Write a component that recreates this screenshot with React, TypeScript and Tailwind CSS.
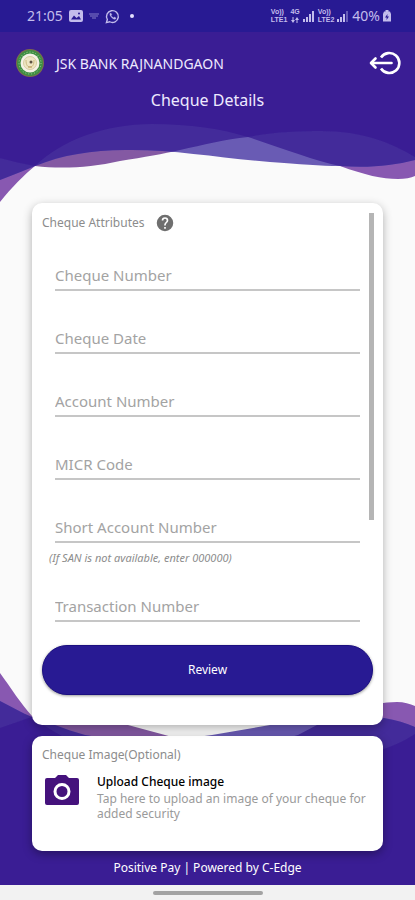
import { useState } from 'react';

interface Field {
  id: string;
  label: string;
  hint?: string;
}

interface WaveProps {
  id: string;
  className: string;
  viewBox: string;
  paths: [string, string, string];
}

const FIELDS: Field[] = [
  { id: 'cheque-number', label: 'Cheque Number' },
  { id: 'cheque-date', label: 'Cheque Date' },
  { id: 'account-number', label: 'Account Number' },
  { id: 'micr-code', label: 'MICR Code' },
  { id: 'short-account-number', label: 'Short Account Number', hint: '(If SAN is not available, enter 000000)' },
  { id: 'transaction-number', label: 'Transaction Number' },
];

const TOP_WAVES: [string, string, string] = [
  'M0 0V202C12 187 24 175 35 166C62 140 105 124 152 124C190 124 222 129 248 137C285 149 312 160 340 166C365 175 382 179 398 179C405 179 411 178 415 176V0Z',
  'M0 0V180C12 175 24 171 35 166C62 155 92 150 125 150C172 149 220 158 270 162C300 164 320 166 340 166C368 168 392 166 415 160V0Z',
  'M0 0V158C12 161 24 164 35 166C60 169 90 168 120 161C145 157 163 154 180 150C203 145 225 139 248 137C272 132 296 131 322 131C362 131 392 143 415 157V0Z',
];

const BOTTOM_WAVES: [string, string, string] = [
  'M0 212V0C11 15 21 31 32 43C70 76 130 90 190 86C240 82 275 68 298 62L317 52C345 38 370 29 397 29C404 29 410 31 415 33V212Z',
  'M0 212V28C12 34 22 40 32 44L55 52C65 56 75 59 85 62C130 70 170 68 212 62L270 52C310 43 350 40 384 45C396 47 406 50 415 54V212Z',
  'M0 212V55C12 51 22 47 32 44C65 37 100 42 128 52L165 62C210 76 265 86 320 86C360 86 392 76 415 61V212Z',
];

// Three overlapping waves: one tint each, darker where two meet, solid where all three do.
function Waves({ id, className, viewBox, paths }: WaveProps) {
  const [a, b, c] = paths;
  return (
    <svg className={className} viewBox={viewBox} preserveAspectRatio="none" aria-hidden="true">
      <defs>
        <clipPath id={`${id}-b`}>
          <path d={b} />
        </clipPath>
        <clipPath id={`${id}-c`}>
          <path d={c} />
        </clipPath>
      </defs>
      <path d={a} fill="#8858b1" />
      <path d={c} fill="#8459a3" />
      <path d={b} fill="#695bb4" />
      <g fill="#432b9a">
        <path d={a} clipPath={`url(#${id}-b)`} />
        <path d={a} clipPath={`url(#${id}-c)`} />
        <path d={b} clipPath={`url(#${id}-c)`} />
      </g>
      <g clipPath={`url(#${id}-b)`}>
        <path d={a} clipPath={`url(#${id}-c)`} fill="#3a1d94" />
      </g>
    </svg>
  );
}

function VolteIcon({ second }: { second: string }) {
  return (
    <span className="flex flex-col font-['Liberation_Sans',sans-serif] text-[7px] leading-[8px] font-bold">
      <span>Vo))</span>
      <span>{second}</span>
    </span>
  );
}

function SignalIcon({ level }: { level: number }) {
  return (
    <svg className="h-3 w-3" viewBox="0 0 12 12" fill="currentColor">
      {[3, 5, 8, 11].map((h, i) => (
        <rect key={h} x={i * 3} y={12 - h} width="2" height={h} opacity={i < level ? 1 : 0.4} />
      ))}
    </svg>
  );
}

function StatusBar() {
  return (
    <div className="relative flex h-8 items-center justify-between bg-[#281a93] pr-6 pl-[27px] text-[#c3bdec]">
      <div className="flex items-center gap-[6px]">
        <span className="text-sm leading-5">21:05</span>
        <svg className="h-3 w-3.5" viewBox="0 0 14 12">
          <rect width="14" height="12" rx="2" fill="currentColor" />
          <path d="M2 9.500l3-4 2.500 2.500L10 6l2 3.500Z" fill="#281a93" />
          <circle cx="10" cy="3.500" r="1" fill="#281a93" />
        </svg>
        <svg className="h-2 w-2.5 opacity-60" viewBox="0 0 10 8" fill="none" stroke="currentColor">
          <path d="M0 2h10M1 4h8M3 6h4" />
        </svg>
        <svg className="h-[15px] w-[15px]" viewBox="0 0 16 16" fill="none" stroke="currentColor" strokeWidth="1.500">
          <path d="M1.500 14.500l1-3.300A6.300 6.300 0 1 1 5 13.600Z" />
          <path d="M5.500 4.500c-1 1 0 3 1.500 4.500s3.500 2.500 4.500 1.500l.3-1-1.800-.9-.9.8C8 9 7 8 6.500 7l.8-.8-.8-1.700Z" fill="currentColor" strokeWidth="0.300" />
        </svg>
        <span className="ml-1 h-1 w-1 rounded-full bg-[#e4e0ff]" />
      </div>
      <div className="flex items-center gap-[3px]">
        <VolteIcon second="LTE1" />
        <span className="flex flex-col items-center font-['Liberation_Sans',sans-serif] text-[7px] leading-[8px] font-bold">
          <span>4G</span>
          <svg className="h-2 w-2" viewBox="0 0 8 8" fill="currentColor">
            <path d="M1.500 1h1v3H4L2 7 0 4h1.500ZM5.500 7h1V4H8L6 1 4 4h1.500Z" />
          </svg>
        </span>
        <SignalIcon level={4} />
        <VolteIcon second="LTE2" />
        <SignalIcon level={3} />
        <span className="text-sm leading-5">40%</span>
        <svg className="h-3 w-2" viewBox="0 0 8 12">
          <path d="M2.500 0h3v1.500H7L8 4v7.500H0V4l1-2.500h1.500Z" fill="currentColor" />
          <path d="M4.500 4L2 7.500h1.700L3.500 10 6 6.500H4.300Z" fill="#281a93" />
        </svg>
      </div>
    </div>
  );
}

function BankLogo() {
  return (
    <svg className="h-7 w-7" viewBox="0 0 28 28" aria-hidden="true">
      <circle cx="14" cy="14" r="14" fill="#7d6b4d" />
      <circle cx="14" cy="14" r="13" fill="#3f8f43" />
      <circle cx="14" cy="14" r="11" fill="none" stroke="#a9cf94" strokeWidth="1" strokeDasharray="1 2" />
      <circle cx="14" cy="14" r="9.500" fill="#f5f1e4" />
      <circle cx="14" cy="14" r="6.500" fill="#efe6c4" stroke="#d8cda2" />
      <path d="M10 11c0 5 1.500 7 4 7s4-2 4-7" fill="none" stroke="#cbbb82" />
      <circle cx="15" cy="13" r="1.500" fill="#5c5142" />
      <path d="M12 18h4" stroke="#b99b5f" />
    </svg>
  );
}

function Header() {
  return (
    <header className="relative flex flex-col px-4 pt-4 text-[#eeeaff]">
      <div className="flex items-center">
        <BankLogo />
        <span className="ml-3 flex-1 pt-[2px] text-sm leading-7">JSK BANK RAJNANDGAON</span>
        <button type="button" aria-label="Log out" className="-mr-0.5 text-white">
          <svg className="h-7 w-8" viewBox="0 0 32 28" fill="none" stroke="currentColor" strokeWidth="2.600">
            <path d="M12 8.500A10 10 0 1 1 12 19.500" />
            <path d="M2.500 14H22.500" strokeLinecap="round" />
            <path d="M6.500 9.500L2 14 6.500 18.500" strokeLinecap="round" strokeLinejoin="round" />
          </svg>
        </button>
      </div>
      <h1 className="mt-[10px] text-center text-base leading-6">Cheque Details</h1>
    </header>
  );
}

export default function App() {
  const [values, setValues] = useState<Record<string, string>>({});

  return (
    <div className="relative flex min-h-screen flex-col bg-[#fafafa] font-['Noto_Sans',sans-serif]">
      <Waves id="top" className="absolute inset-x-0 top-0 h-[202px] w-full" viewBox="0 0 415 202" paths={TOP_WAVES} />
      <Waves
        id="bottom"
        className="absolute inset-x-0 bottom-[15px] h-[212px] w-full"
        viewBox="0 0 415 212"
        paths={BOTTOM_WAVES}
      />

      <StatusBar />
      <Header />

      <main className="relative mt-[91px] flex flex-col gap-[11px] px-8">
        <form
          className="relative rounded-[10px] bg-white px-[10px] pb-[30px] shadow-[0_3px_10px_rgba(0,0,0,0.3)]"
          onSubmit={(e) => e.preventDefault()}
        >
          <div className="absolute top-[10px] right-[9px] h-[307px] w-[5px] bg-[#b5b5b5]" />
          <div className="flex items-center gap-3 pt-[10px] text-[#8c8c8c]">
            <h2 className="text-xs leading-5">Cheque Attributes</h2>
            <button type="button" aria-label="Help">
              <svg className="h-[18px] w-[18px]" viewBox="0 0 24 24" fill="#6f6f6f">
                <path d="M12 1a11 11 0 1 0 0 22 11 11 0 0 0 0-22zm1.100 18.500h-2.200v-2.200h2.200v2.200zm2.300-8.500l-1 1c-.8.800-1.300 1.500-1.300 3.200h-2.200v-.6c0-1.200.5-2.300 1.300-3.100l1.400-1.400c.4-.4.600-.9.600-1.500a2.200 2.200 0 0 0-4.400 0H7.600a4.400 4.400 0 0 1 8.800 0c0 1-.4 1.800-1 2.400z" />
              </svg>
            </button>
          </div>

          <div className="px-[13px] pb-[23px]">
            {FIELDS.map((field, i) => (
              <div key={field.id} className={i === 0 ? 'pt-[26px]' : 'pt-[31px]'}>
                <input
                  id={field.id}
                  aria-label={field.label}
                  placeholder={field.label}
                  value={values[field.id] ?? ''}
                  onChange={(e) => setValues({ ...values, [field.id]: e.target.value })}
                  className="block h-8 w-full border-b-2 border-[#c6c6c6] bg-transparent pt-[2px] text-[15px] text-[#444] outline-none placeholder:text-[#a3a3a3]"
                />
                {field.hint && (
                  <p className="-mb-[6px] -ml-[6px] pt-2 text-[11px] leading-[14px] text-[#8c8c8c] italic">{field.hint}</p>
                )}
              </div>
            ))}
          </div>

          <button
            type="submit"
            className="h-[50px] w-full rounded-full border border-[#1b0f80] bg-[#281a93] text-xs text-white shadow-[0_1px_3px_rgba(0,0,0,0.4)]"
          >
            Review
          </button>
        </form>

        <section className="rounded-[10px] bg-white px-[10px] pt-[9px] pb-[30px] shadow-[0_3px_10px_rgba(0,0,0,0.35)]">
          <h2 className="text-xs leading-5 text-[#8c8c8c]">Cheque Image(Optional)</h2>
          <button type="button" className="mt-2 flex w-full items-start text-left text-xs">
            <svg className="mt-[2px] ml-[3px] h-[30px] w-[34px] shrink-0" viewBox="0 0 34 30">
              <path d="M2 3h8l3-3h8l3 3h8a2 2 0 0 1 2 2v23a2 2 0 0 1-2 2H2a2 2 0 0 1-2-2V5a2 2 0 0 1 2-2Z" fill="#45127c" />
              <circle cx="17" cy="16.500" r="7" fill="none" stroke="#fff" strokeWidth="3" />
            </svg>
            <span className="ml-[18px] flex-1">
              <span className="block leading-[18px] font-medium text-black">Upload Cheque image</span>
              <span className="block leading-[15px] text-[#9a9a9a]">
                Tap here to upload an image of your cheque for added security
              </span>
            </span>
          </button>
        </section>
      </main>

      <footer className="relative mt-auto">
        <p className="pb-[7px] text-center text-xs leading-5 text-white">Positive Pay | Powered by C-Edge</p>
        <div className="flex h-[15px] items-center justify-center bg-[#f2f2f2]">
          <div className="h-1 w-[110px] rounded-full bg-[#a3a3a3]" />
        </div>
      </footer>
    </div>
  );
}
